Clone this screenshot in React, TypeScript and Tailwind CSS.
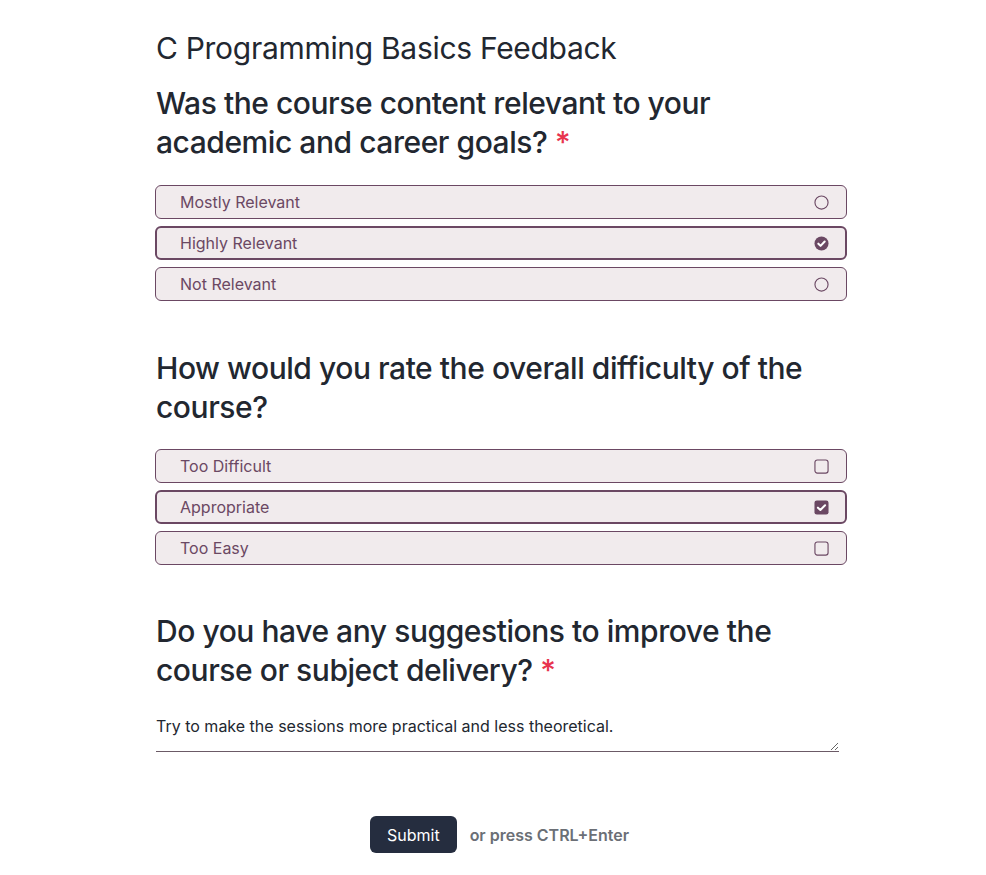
const font = { fontFamily: "Inter, 'Noto Sans', sans-serif" };

function RadioIcon({ checked }: { checked: boolean }) {
  if (checked) {
    return (
      <svg width="15" height="15" viewBox="0 0 16 16">
        <circle cx="8" cy="8" r="7.5" fill="#6b4863" />
        <path d="M4.6 8.2 L7 10.5 L11.4 5.9" fill="none" stroke="#fff" strokeWidth="2.2" strokeLinecap="round" strokeLinejoin="round" />
      </svg>
    );
  }
  return (
    <svg width="15" height="15" viewBox="0 0 16 16">
      <circle cx="8" cy="8" r="7" fill="none" stroke="#6b4863" strokeWidth="1.2" />
    </svg>
  );
}

function CheckIcon({ checked }: { checked: boolean }) {
  if (checked) {
    return (
      <svg width="15" height="15" viewBox="0 0 16 16">
        <rect x="0.5" y="0.5" width="15" height="15" rx="2.5" fill="#6b4863" />
        <path d="M4.2 8.2 L6.8 10.6 L11.8 5.6" fill="none" stroke="#fff" strokeWidth="2.2" strokeLinecap="round" strokeLinejoin="round" />
      </svg>
    );
  }
  return (
    <svg width="15" height="15" viewBox="0 0 16 16">
      <rect x="1" y="1" width="14" height="14" rx="2.5" fill="none" stroke="#6b4863" strokeWidth="1.2" />
    </svg>
  );
}

function Option({ label, checked, kind }: { label: string; checked: boolean; kind: "radio" | "check" }) {
  return (
    <div
      className={
        "flex h-[34px] items-center justify-between rounded-md bg-[#f1ebed] text-[16px] text-[#6b4863] " +
        (checked ? "border-2 border-[#6b4863] pl-[23px] pr-[16px]" : "border border-[#6b4863] pl-6 pr-[17px]")
      }
    >
      <span>{label}</span>
      {kind === "radio" ? <RadioIcon checked={checked} /> : <CheckIcon checked={checked} />}
    </div>
  );
}

function Question({ children, required }: { children: string; required?: boolean }) {
  return (
    <h2 className="max-w-[680px] text-[30px] leading-[39px] font-medium tracking-[-0.015em] text-[#222730]">
      {children}
      {required && <span className="text-[#e8344e]">{"\u00a0*"}</span>}
    </h2>
  );
}

export default function App() {
  return (
    <div className="min-h-screen bg-white" style={font}>
      <div className="mx-auto w-[708px] pl-[17px] pt-[29px]">
        <h1 className="text-[30px] leading-[39px] font-normal tracking-[-0.01em] text-[#222730]">
          C Programming Basics Feedback
        </h1>

        <div className="mt-[16px]">
          <Question required>Was the course content relevant to your academic and career goals?</Question>
          <div className="mt-[23px] -ml-px flex flex-col gap-[7px]">
            <Option kind="radio" label="Mostly Relevant" checked={false} />
            <Option kind="radio" label="Highly Relevant" checked />
            <Option kind="radio" label="Not Relevant" checked={false} />
          </div>
        </div>

        <div className="mt-[48px]">
          <Question>How would you rate the overall difficulty of the course?</Question>
          <div className="mt-[22px] -ml-px flex flex-col gap-[7px]">
            <Option kind="check" label="Too Difficult" checked={false} />
            <Option kind="check" label="Appropriate" checked />
            <Option kind="check" label="Too Easy" checked={false} />
          </div>
        </div>

        <div className="mt-[47px]">
          <Question required>Do you have any suggestions to improve the course or subject delivery?</Question>
          <textarea
            className="mt-[24px] block h-[38px] w-[683px] resize-y border-b border-[#6b5a66] bg-transparent text-[16px] leading-[24px] text-[#222730] outline-none"
            defaultValue="Try to make the sessions more practical and less theoretical."
          />
        </div>

        <div className="mt-[64px] flex items-center justify-center gap-[13px] pr-[4px]">
          <button className="h-[37px] rounded-md bg-[#252d3f] px-[17px] text-[16px] text-white">Submit</button>
          <span className="text-[16px] font-semibold text-[#6b6f76]">or press CTRL+Enter</span>
        </div>
      </div>
    </div>
  );
}
